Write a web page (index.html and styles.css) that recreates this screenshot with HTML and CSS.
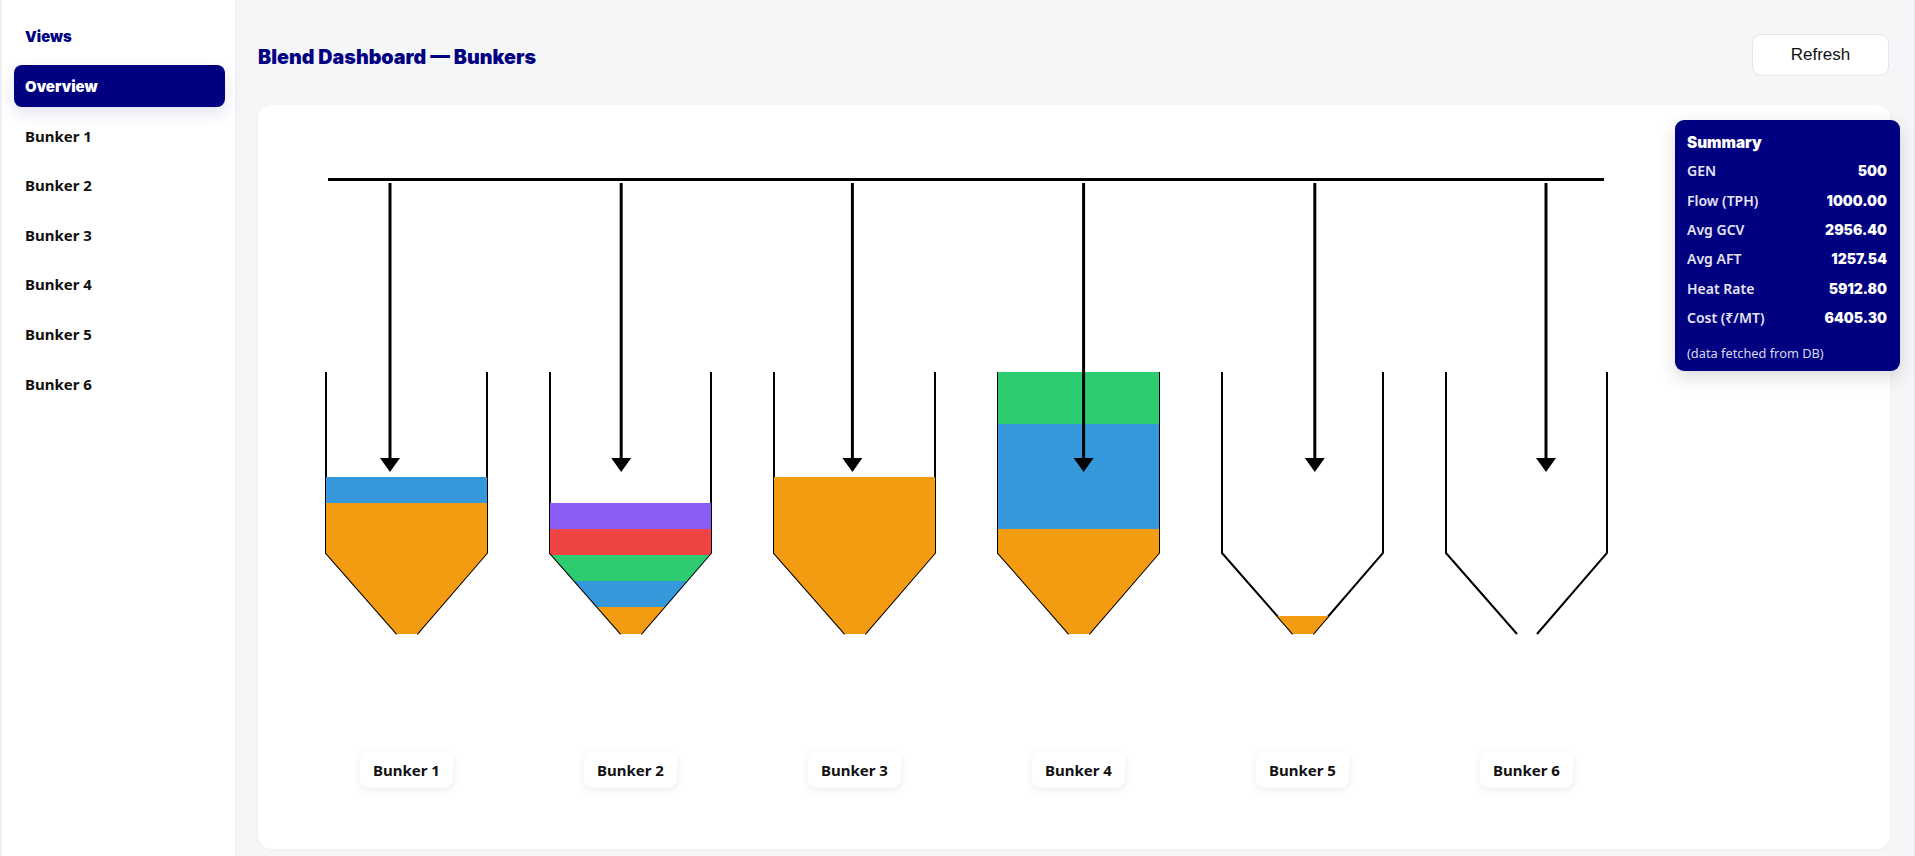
FILE: index.html
```html
<!DOCTYPE html>
<html lang="en">
<head>
<meta charset="utf-8">
<title>Blend Dashboard — Bunkers</title>
<link rel="stylesheet" href="styles.css">
</head>
<body>
<div class="app">
  <aside class="sidebar">
    <div class="views">Views</div>
    <nav class="nav">
      <div class="nav-item active">Overview</div>
      <div class="nav-item">Bunker 1</div>
      <div class="nav-item">Bunker 2</div>
      <div class="nav-item">Bunker 3</div>
      <div class="nav-item">Bunker 4</div>
      <div class="nav-item">Bunker 5</div>
      <div class="nav-item">Bunker 6</div>
    </nav>
  </aside>
  <main class="main">
    <header class="header">
      <h1 class="title">Blend Dashboard — Bunkers</h1>
      <button class="refresh">Refresh</button>
    </header>
    <section class="card">
      <svg class="diagram" width="1632" height="646" viewBox="258 105 1632 646" xmlns="http://www.w3.org/2000/svg">
        <defs>
          <clipPath id="bk" clipPathUnits="userSpaceOnUse">
            <polygon points="326,372 487,372 487,553 417,634 397,634 326,553"/>
          </clipPath>
        </defs>
        <line x1="328" y1="179.5" x2="1604" y2="179.5" stroke="#000" stroke-width="3"/>

        <g>
          <path class="hopper" d="M326 372 V553 L397 634 M417 634 L487 553 V372"/>
          <g clip-path="url(#bk)">
            <rect x="324" y="503" width="165" height="133" fill="#f39c12"/>
            <rect x="324" y="477" width="165" height="26" fill="#3498db"/>
          </g>
        </g>
        <g transform="translate(224,0)">
          <path class="hopper" d="M326 372 V553 L397 634 M417 634 L487 553 V372"/>
          <g clip-path="url(#bk)">
            <rect x="324" y="607" width="165" height="29" fill="#f39c12"/>
            <rect x="324" y="581" width="165" height="26" fill="#3498db"/>
            <rect x="324" y="555" width="165" height="26" fill="#2ecc71"/>
            <rect x="324" y="529" width="165" height="26" fill="#ef4444"/>
            <rect x="324" y="503" width="165" height="26" fill="#8b5cf6"/>
          </g>
        </g>
        <g transform="translate(448,0)">
          <path class="hopper" d="M326 372 V553 L397 634 M417 634 L487 553 V372"/>
          <g clip-path="url(#bk)">
            <rect x="324" y="477" width="165" height="159" fill="#f39c12"/>
          </g>
        </g>
        <g transform="translate(672,0)">
          <path class="hopper" d="M326 372 V553 L397 634 M417 634 L487 553 V372"/>
          <g clip-path="url(#bk)">
            <rect x="324" y="529" width="165" height="107" fill="#f39c12"/>
            <rect x="324" y="424" width="165" height="105" fill="#3498db"/>
            <rect x="324" y="372" width="165" height="52" fill="#2ecc71"/>
          </g>
        </g>
        <g transform="translate(896,0)">
          <path class="hopper" d="M326 372 V553 L397 634 M417 634 L487 553 V372"/>
          <g clip-path="url(#bk)">
            <rect x="324" y="616" width="165" height="20" fill="#f39c12"/>
          </g>
        </g>
        <g transform="translate(1120,0)">
          <path class="hopper" d="M326 372 V553 L397 634 M417 634 L487 553 V372"/>
        </g>

        <g class="arrows">
          <line x1="390" y1="183" x2="390" y2="459"/>
          <polygon points="380,458 400,458 390,472"/>
          <line x1="621.2" y1="183" x2="621.2" y2="459"/>
          <polygon points="611.2,458 631.2,458 621.2,472"/>
          <line x1="852.4" y1="183" x2="852.4" y2="459"/>
          <polygon points="842.4,458 862.4,458 852.4,472"/>
          <line x1="1083.6" y1="183" x2="1083.6" y2="459"/>
          <polygon points="1073.6,458 1093.6,458 1083.6,472"/>
          <line x1="1314.8" y1="183" x2="1314.8" y2="459"/>
          <polygon points="1304.8,458 1324.8,458 1314.8,472"/>
          <line x1="1546" y1="183" x2="1546" y2="459"/>
          <polygon points="1536,458 1556,458 1546,472"/>
        </g>
      </svg>
      <div class="labels">
        <div class="label-cell"><span class="label">Bunker 1</span></div>
        <div class="label-cell"><span class="label">Bunker 2</span></div>
        <div class="label-cell"><span class="label">Bunker 3</span></div>
        <div class="label-cell"><span class="label">Bunker 4</span></div>
        <div class="label-cell"><span class="label">Bunker 5</span></div>
        <div class="label-cell"><span class="label">Bunker 6</span></div>
      </div>

      <div class="summary">
        <div class="summary-title">Summary</div>
        <div class="row"><span class="k">GEN</span><span class="v">500</span></div>
        <div class="row"><span class="k">Flow (TPH)</span><span class="v">1000.00</span></div>
        <div class="row"><span class="k">Avg GCV</span><span class="v">2956.40</span></div>
        <div class="row"><span class="k">Avg AFT</span><span class="v">1257.54</span></div>
        <div class="row"><span class="k">Heat Rate</span><span class="v">5912.80</span></div>
        <div class="row"><span class="k">Cost (₹/MT)</span><span class="v">6405.30</span></div>
        <div class="summary-note">(data fetched from DB)</div>
      </div>
    </section>
  </main>
</div>
</body>
</html>
```

FILE: styles.css
```css
* { box-sizing: border-box; }

html, body {
  margin: 0;
  padding: 0;
  height: 100%;
}

body {
  background: #f5f6f8;
  font-family: "Noto Sans", "Open Sans", sans-serif;
  color: #111;
  overflow: hidden;
}

.app {
  display: flex;
  height: 100vh;
  border-right: 1px solid #e3e5ea;
}

.sidebar {
  width: 235px;
  flex: none;
  background: #fff;
  padding: 26px 10px 0 12px;
  box-shadow: 2px 0 8px rgba(0, 0, 0, 0.03);
  border-left: 2px solid #eef0f3;
}

.views {
  font-family: Inter, "Noto Sans", sans-serif;
  font-weight: 900;
  font-size: 14.8px;
  line-height: 22px;
  color: #000080;
  padding-left: 11px;
  margin-bottom: 17px;
}

.nav {
  display: flex;
  flex-direction: column;
  gap: 7.6px;
}

.nav-item {
  height: 42px;
  display: flex;
  align-items: center;
  padding-left: 11px;
  font-size: 15px;
  font-weight: 700;
  color: #111;
  border-radius: 8px;
}

.nav-item.active {
  background: #000080;
  color: #fff;
  font-family: Inter, "Noto Sans", sans-serif;
  font-weight: 900;
  box-shadow: 0 6px 16px rgba(0, 0, 128, 0.12);
}

.main {
  flex: 1;
  display: flex;
  flex-direction: column;
  padding: 34px 24px 0 23px;
  min-width: 0;
}

.header {
  display: flex;
  align-items: center;
  justify-content: space-between;
  height: 42px;
  margin-bottom: 29px;
}

.title {
  margin: 0;
  font-family: Inter, "Noto Sans", sans-serif;
  font-size: 19.7px;
  font-weight: 900;
  color: #000080;
  position: relative;
  top: 2px;
}

.refresh {
  width: 137px;
  height: 42px;
  margin-right: 1px;
  background: #fff;
  border: 1px solid #e3e5ea;
  border-radius: 9px;
  font-family: "Liberation Sans", Arial, sans-serif;
  font-size: 17px;
  color: #111;
  padding: 0;
}

.card {
  position: relative;
  width: 1632px;
  height: 744px;
  background: #fff;
  border-radius: 14px;
  box-shadow: 0 1px 4px rgba(0, 0, 0, 0.04);
  display: flex;
  flex-direction: column;
}

.diagram {
  display: block;
  flex: none;
}

.hopper {
  fill: none;
  stroke: #000;
  stroke-width: 2;
}

.arrows line {
  stroke: #000;
  stroke-width: 3;
}

.arrows polygon {
  fill: #000;
}

.labels {
  display: flex;
  padding-left: 36.5px;
  height: 37px;
}

.label-cell {
  width: 224px;
  display: flex;
  justify-content: center;
}

.label {
  display: inline-flex;
  align-items: center;
  justify-content: center;
  width: 93px;
  height: 37px;
  background: #fff;
  border-radius: 9px;
  box-shadow: 0 2px 8px rgba(0, 0, 0, 0.08);
  font-size: 15px;
  font-weight: 700;
  color: #111;
}

.summary {
  position: absolute;
  top: 15px;
  right: -10px;
  width: 225px;
  background: #000080;
  border-radius: 9px;
  padding: 12px 13px 9px 12px;
  color: #fff;
  box-shadow: 0 6px 18px rgba(0, 0, 0, 0.15);
}

.summary-title {
  font-family: Inter, "Noto Sans", sans-serif;
  font-weight: 900;
  font-size: 15.3px;
  line-height: 22px;
  margin-bottom: 2px;
}

.row {
  display: flex;
  justify-content: space-between;
  align-items: center;
  height: 29.4px;
}

.k {
  font-size: 14px;
  font-weight: 600;
  color: #e4e4f4;
}

.v {
  font-family: Inter, "Noto Sans", sans-serif;
  font-size: 14px;
  font-weight: 900;
  color: #fff;
}

.summary-note {
  margin-top: 12px;
  font-size: 12.8px;
  line-height: 18px;
  color: #d8d8ee;
}
```
